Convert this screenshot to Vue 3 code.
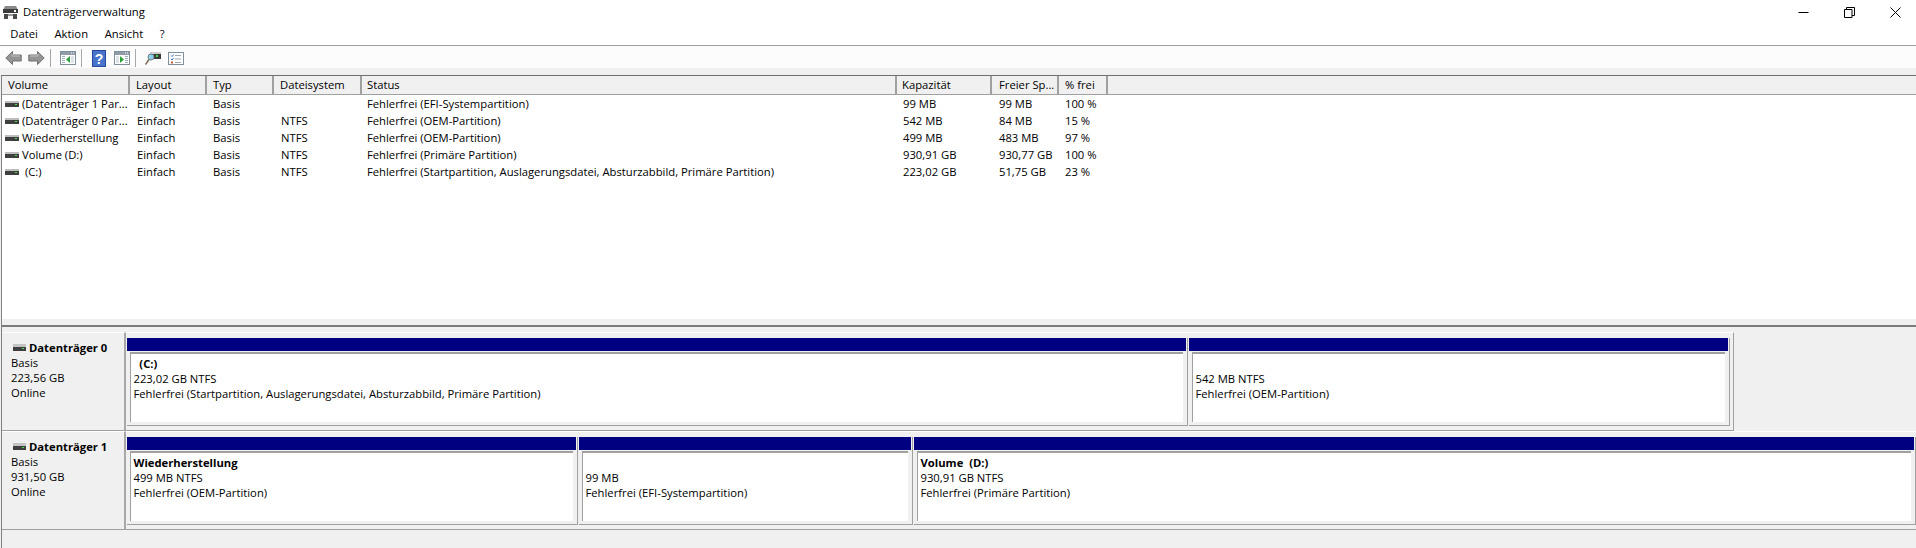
<script setup>
const menus = ['Datei', 'Aktion', 'Ansicht', '?']
const columns = ['Volume', 'Layout', 'Typ', 'Dateisystem', 'Status', 'Kapazität', 'Freier Sp...', '% frei', '']
const rows = [
  ['(Datenträger 1 Par...', 'Einfach', 'Basis', '', 'Fehlerfrei (EFI-Systempartition)', '99 MB', '99 MB', '100 %'],
  ['(Datenträger 0 Par...', 'Einfach', 'Basis', 'NTFS', 'Fehlerfrei (OEM-Partition)', '542 MB', '84 MB', '15 %'],
  ['Wiederherstellung', 'Einfach', 'Basis', 'NTFS', 'Fehlerfrei (OEM-Partition)', '499 MB', '483 MB', '97 %'],
  ['Volume (D:)', 'Einfach', 'Basis', 'NTFS', 'Fehlerfrei (Primäre Partition)', '930,91 GB', '930,77 GB', '100 %'],
  ['\u00a0(C:)', 'Einfach', 'Basis', 'NTFS', 'Fehlerfrei (Startpartition, Auslagerungsdatei, Absturzabbild, Primäre Partition)', '223,02 GB', '51,75 GB', '23 %'],
]
const disks = [
  {
    name: 'Datenträger 0', size: '223,56 GB', frame: 1608,
    parts: [
      { w: 1061, title: '\u00a0\u00a0(C:)', size: '223,02 GB NTFS', status: 'Fehlerfrei (Startpartition, Auslagerungsdatei, Absturzabbild, Primäre Partition)' },
      { w: 541, title: '\u00a0', size: '542 MB NTFS', status: 'Fehlerfrei (OEM-Partition)' },
    ],
  },
  {
    name: 'Datenträger 1', size: '931,50 GB', frame: 1795,
    parts: [
      { w: 451, title: 'Wiederherstellung', size: '499 MB NTFS', status: 'Fehlerfrei (OEM-Partition)' },
      { w: 334, title: '\u00a0', size: '99 MB', status: 'Fehlerfrei (EFI-Systempartition)' },
      { w: 1002, title: 'Volume  (D:)', size: '930,91 GB NTFS', status: 'Fehlerfrei (Primäre Partition)' },
    ],
  },
]
</script>

<template>
  <div class="window">
    <header class="titlebar">
      <svg class="app-icon" width="17" height="15" viewBox="0 0 17 15">
        <path d="M3 1h11l2 4H1z" fill="#8a8a8a" />
        <rect x="1" y="4" width="15" height="4" fill="#3c3c3c" />
        <rect x="12" y="5" width="2" height="2" fill="#fff" />
        <rect x="2" y="9" width="4" height="5" fill="#4a4a4a" />
        <rect x="11" y="9" width="4" height="5" fill="#4a4a4a" />
        <rect x="6" y="9" width="5" height="2" fill="#9a9a9a" />
      </svg>
      <span class="title">Datenträgerverwaltung</span>
      <div class="winbtns">
        <div class="winbtn">
          <svg width="11" height="11" viewBox="0 0 11 11"><path d="M0.5 5.5h10" stroke="#000" fill="none" /></svg>
        </div>
        <div class="winbtn">
          <svg width="11" height="11" viewBox="0 0 11 11">
            <path d="M0.5 2.5h7.5v8h-7.5z M2.5 2.5v-2h8v8h-2.5" stroke="#000" fill="none" />
          </svg>
        </div>
        <div class="winbtn">
          <svg width="11" height="11" viewBox="0 0 11 11"><path d="M0.5 0.5l10 10M10.5 0.5l-10 10" stroke="#000" fill="none" /></svg>
        </div>
      </div>
    </header>

    <nav class="menubar">
      <span v-for="m in menus" :key="m" class="menuitem">{{ m }}</span>
    </nav>

    <div class="toolbar">
      <div class="tool">
        <svg width="17" height="14" viewBox="0 0 17 14">
          <path d="M7.5 0.5L0.8 7l6.7 6.500V10h8.700V4H7.500z" fill="#949494" stroke="#727272" />
          <path d="M7 3v2h8" fill="none" stroke="#c4c4c4" />
        </svg>
      </div>
      <div class="tool">
        <svg width="17" height="14" viewBox="0 0 17 14">
          <path d="M9.500 0.500L16.200 7l-6.700 6.500V10H0.800V4h8.700z" fill="#949494" stroke="#727272" />
          <path d="M10 3v2H2" fill="none" stroke="#c4c4c4" />
        </svg>
      </div>
      <div class="sep"></div>
      <div class="tool">
        <svg width="16" height="14" viewBox="0 0 16 14">
          <rect x="0.500" y="0.500" width="15" height="13" fill="#fff" stroke="#7f8f9c" />
          <rect x="1" y="1" width="14" height="3" fill="#8f9ba6" />
          <path d="M11 2h1M13 2h1" stroke="#fff" />
          <path d="M2 5h3v1H2zM2 7h3v1H2zM2 9h3v1H2zM2 11h3v1H2z" fill="#9fb0bd" />
          <path d="M11 5h3v7h-3z" fill="#dde3e8" />
          <path d="M10 5v7L6 8.500z" fill="#2aa23a" />
        </svg>
      </div>
      <div class="sep"></div>
      <div class="tool">
        <svg width="14" height="17" viewBox="0 0 14 17">
          <rect width="14" height="17" fill="#26479f" />
          <rect x="1" y="1" width="12" height="15" fill="#4a74c9" />
          <text x="7" y="14" class="help-q" text-anchor="middle">?</text>
        </svg>
      </div>
      <div class="tool">
        <svg width="16" height="14" viewBox="0 0 16 14">
          <rect x="0.500" y="0.500" width="15" height="13" fill="#fff" stroke="#7f8f9c" />
          <rect x="1" y="1" width="14" height="3" fill="#8f9ba6" />
          <path d="M11 2h1M13 2h1" stroke="#fff" />
          <path d="M11 5h3v1h-3zM11 7h3v1h-3zM11 9h3v1h-3zM11 11h3v1h-3z" fill="#9fb0bd" />
          <path d="M2 5h3v7H2z" fill="#dde3e8" />
          <path d="M6 5v7l4-3.500z" fill="#2aa23a" />
        </svg>
      </div>
      <div class="sep"></div>
      <div class="tool">
        <svg width="16" height="14" viewBox="0 0 16 14">
          <rect x="5" y="2" width="11" height="6" fill="#3a3a3a" />
          <rect x="5" y="1" width="11" height="2" fill="#cfcfcf" />
          <rect x="11" y="4" width="2" height="2" fill="#3ddc4a" />
          <circle cx="6" cy="6" r="3" fill="#8fd0e8" stroke="#6a7f8a" />
          <path d="M4 8.500L0.500 13.500" stroke="#7b6a55" stroke-width="1.500" />
        </svg>
      </div>
      <div class="tool">
        <svg width="16" height="13" viewBox="0 0 16 13">
          <rect x="0.500" y="0.500" width="15" height="12" fill="#fff" stroke="#7f8f9c" />
          <path d="M3 3.500l1 1 1.500-2M3 7l1 1 1.500-2" stroke="#2f6fc4" fill="none" />
          <rect x="3" y="9.500" width="2" height="2" fill="#c05a3a" />
          <path d="M7 3.500h6M7 7h6M7 10.500h6" stroke="#9aa5ae" />
        </svg>
      </div>
    </div>

    <main class="content">
      <section class="list">
        <div class="list-head">
          <div v-for="(c, i) in columns" :key="i" class="head-cell">{{ c }}</div>
        </div>
        <div class="list-body">
          <div v-for="r in rows" :key="r[0]" class="list-row">
            <div class="cell name">
              <svg class="drive" width="14" height="6" viewBox="0 0 14 6">
                <rect width="14" height="2" fill="#bdbdbd" />
                <rect y="2" width="14" height="4" fill="#3f3f3f" />
                <rect x="10" y="3" width="2" height="1" fill="#46e04e" />
              </svg>
              <span>{{ r[0] }}</span>
            </div>
            <div v-for="(v, i) in r.slice(1)" :key="i" class="cell">{{ v }}</div>
          </div>
        </div>
      </section>

      <section class="graphic">
        <div v-for="d in disks" :key="d.name" class="disk">
          <div class="disk-label">
            <div class="disk-name">
              <svg class="drive" width="13" height="8" viewBox="0 0 13 8">
                <rect width="13" height="3" fill="#c4c4c4" />
                <rect y="3" width="13" height="4" fill="#3f3f3f" />
                <rect x="9" y="4" width="2" height="1" fill="#46e04e" />
              </svg>
              <b>{{ d.name }}</b>
            </div>
            <div>Basis</div>
            <div>{{ d.size }}</div>
            <div>Online</div>
          </div>
          <div class="frame" :style="{ width: d.frame + 'px' }">
            <div v-for="p in d.parts" :key="p.size" class="part" :style="{ width: p.w + 'px' }">
              <div class="bar"></div>
              <div class="box">
                <b>{{ p.title }}</b>
                <div>{{ p.size }}</div>
                <div>{{ p.status }}</div>
              </div>
            </div>
          </div>
        </div>
      </section>
    </main>
  </div>
</template>

<style>
html, body { margin: 0; background: #f0f0f0; overflow: hidden; }
</style>

<style scoped>
.window {
  width: 1916px;
  height: 548px;
  overflow: hidden;
  display: flex;
  flex-direction: column;
  background: #f0f0f0;
  color: #000;
  font-family: "Open Sans", "Liberation Sans", sans-serif;
  font-size: 11.25px;
  line-height: 15px;
}
.titlebar {
  height: 24px;
  flex: none;
  display: flex;
  align-items: center;
  background: #fff;
}
.app-icon { margin-left: 2px; flex: none; }
.title { margin: 0 0 2px 4px; }
.winbtns { margin-left: auto; display: flex; }
.winbtn {
  width: 46px;
  height: 20px;
  box-sizing: border-box;
  padding-left: 4px;
  display: flex;
  align-items: center;
  justify-content: center;
}
.menubar {
  height: 21px;
  flex: none;
  display: flex;
  align-items: center;
  padding-left: 2px;
  background: #fff;
  border-bottom: 1px solid #a0a0a0;
}
.menuitem { padding: 0 8.3px 2px; }
.toolbar {
  height: 20px;
  flex: none;
  display: flex;
  align-items: center;
  padding: 2px 0 0 2px;
  background: #fcfcfc;
  margin-bottom: 7px;
}
.tool {
  width: 23px;
  height: 20px;
  display: flex;
  align-items: center;
  justify-content: center;
}
.sep {
  width: 1px;
  height: 18px;
  margin: 0 5px 0 2px;
  background: #a8a8a8;
}
.help-q { font: bold 14px "Liberation Sans", sans-serif; fill: #fff; }
.content {
  flex: 1;
  min-height: 0;
  display: flex;
  flex-direction: column;
  margin-left: 1px;
  border-left: 1px solid #808080;
  border-top: 1px solid #707070;
}
.list {
  height: 243px;
  flex: none;
  background: #fff;
  border-bottom: 6px solid #f0f0f0;
}
.list-head, .list-row {
  display: grid;
  grid-template-columns: 128px 77px 67px 88px 535px 95px 67px 49px 1fr;
}
.list-head {
  height: 19px;
  background: #f0f0f0;
  border-bottom: 1px solid #a0a0a0;
  box-sizing: border-box;
}
.head-cell {
  padding: 1px 0 0 6px;
  border-right: 2px solid #a0a0a0;
  white-space: nowrap;
}
.head-cell:nth-child(5), .head-cell:nth-child(6) { padding-left: 5px; }
.head-cell:nth-child(7) { padding-left: 7px; }
.head-cell:last-child { border-right: 0; }
.list-row { height: 17px; }
.cell {
  padding-left: 6px;
  line-height: 17px;
  white-space: nowrap;
}
.cell:nth-child(2), .cell:nth-child(4), .cell:nth-child(7) { padding-left: 7px; }
.cell:nth-child(5) { padding-left: 5px; }
.cell.name {
  padding-left: 3px;
  display: flex;
  align-items: center;
  gap: 3px;
  overflow: hidden;
}
.drive { flex: none; }
.graphic {
  flex: 1;
  min-height: 0;
  border-top: 2px solid #7a7a7a;
  padding-top: 5px;
}
.disk {
  height: 99px;
  box-sizing: border-box;
  display: flex;
}
.disk-label {
  width: 124px;
  flex: none;
  box-sizing: border-box;
  padding: 7px 0 0 9px;
  background: #f0f0f0;
  border-top: 1px solid #fff;
  border-right: 2px solid #a8a8a8;
  border-bottom: 1px solid #a0a0a0;
}
.disk-name {
  display: flex;
  align-items: center;
  gap: 3px;
  margin-left: 2px;
}
.frame {
  flex: none;
  box-sizing: border-box;
  display: flex;
  padding: 5px 0 0 1px;
  border-top: 1px solid #fff;
  border-right: 1px solid #a0a0a0;
  border-bottom: 1px solid #a0a0a0;
}
.part {
  flex: none;
  box-sizing: border-box;
  height: 88px;
  margin-right: 1px;
  padding-right: 2px;
  display: flex;
  flex-direction: column;
  border-right: 1px solid #a0a0a0;
  border-bottom: 1px solid #a0a0a0;
}
.part:last-child { margin-right: 0; }
.bar {
  height: 13px;
  flex: none;
  margin-right: -1px;
  background: #000080;
}
.box {
  flex: none;
  height: 70px;
  box-sizing: border-box;
  margin: 1px 2px 0 3px;
  padding: 2px 0 0 2.5px;
  background: #fff;
  border-top: 2px solid #a0a0a0;
  border-left: 1px solid #a0a0a0;
  white-space: pre;
}
.box b { display: block; font-weight: 700; }
</style>
